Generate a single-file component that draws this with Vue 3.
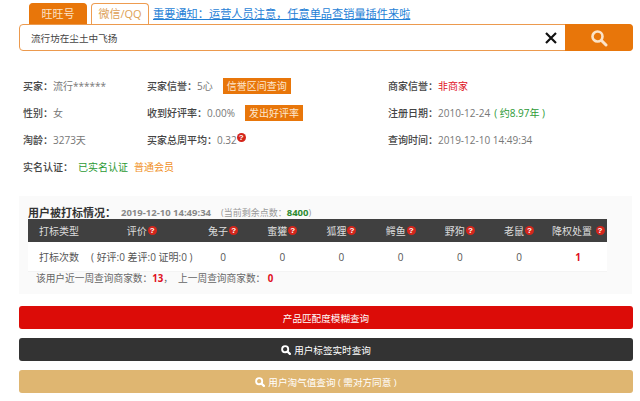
<script setup>
const infoRows = [
  { a: '买家', av: '流行******', b: '买家信誉', bv: '5心', btn: '信誉区间查询', c: '商家信誉', cv: '非商家' },
  { a: '性别', av: '女', b: '收到好评率', bv: '0.00%', btn: '发出好评率', c: '注册日期', cv: '2010-12-24', cy: '( 约8.97年 )' },
  { a: '淘龄', av: '3273天', b: '买家总周平均', bv: '0.32', help: true, c: '查询时间', cv: '2019-12-10 14:49:34' }
]
const tags = ['兔子', '蜜獾', '狐狸', '鳄鱼', '野狗', '老鼠']
</script>

<template>
  <div class="page">
    <div class="tabs">
      <div class="tab active">旺旺号</div>
      <div class="tab">微信/QQ</div>
      <a class="notice">重要通知：运营人员注意，任意单品查销量插件来啦</a>
    </div>

    <div class="search">
      <div class="search-input">流行坊在尘土中飞扬</div>
      <svg class="clear" width="14" height="14" viewBox="0 0 14 14">
        <path d="M2 2 12 12M12 2 2 12" stroke="#111" stroke-width="2.2" fill="none" />
      </svg>
      <div class="search-btn">
        <svg width="18" height="18" viewBox="0 0 18 18">
          <circle cx="7.5" cy="7.5" r="5" stroke="#fbe3c8" stroke-width="2.6" fill="none" />
          <path d="M11.5 11.5 16 16" stroke="#fbe3c8" stroke-width="3" stroke-linecap="round" />
        </svg>
      </div>
    </div>

    <div class="info">
      <div v-for="row in infoRows" :key="row.a" class="info-row">
        <div class="cell c1"><b>{{ row.a }}：</b><span>{{ row.av }}</span></div>
        <div class="cell c2">
          <b>{{ row.b }}：</b><span>{{ row.bv }}</span>
          <i v-if="row.help" class="help up">?</i>
          <em v-if="row.btn">{{ row.btn }}</em>
        </div>
        <div class="cell">
          <b>{{ row.c }}：</b><span :class="{ red: row.c === '商家信誉' }">{{ row.cv }}</span>
          <span v-if="row.cy" class="green">{{ row.cy }}</span>
        </div>
      </div>
      <div class="info-row">
        <div class="cell">
          <b>实名认证：</b><span class="green auth">已实名认证</span><span class="orange">普通会员</span>
        </div>
      </div>
    </div>

    <div class="panel">
      <div class="panel-title">
        <b>用户被打标情况：</b>
        <span class="when">2019-12-10 14:49:34</span>
        <span class="points">(当前剩余点数：<b>8400</b>)</span>
      </div>
      <div class="grid head">
        <div class="first">打标类型</div>
        <div>评价<i class="help">?</i></div>
        <div v-for="t in tags" :key="t">{{ t }}<i class="help">?</i></div>
        <div>降权处置 <i class="help">?</i></div>
      </div>
      <div class="grid body">
        <div class="first">打标次数</div>
        <div>( 好评:0 差评:0 证明:0 )</div>
        <div v-for="t in tags" :key="t">0</div>
        <div class="red strong">1</div>
      </div>
      <div class="week">
        该用户近一周查询商家数：<b>13</b>， &nbsp;上一周查询商家数： <b>0</b>
      </div>
    </div>

    <div class="actions">
      <div class="action a-red">产品匹配度模糊查询</div>
      <div class="action a-dark">
        <svg width="10" height="10" viewBox="0 0 18 18">
          <circle cx="7.5" cy="7.5" r="5.5" stroke="#fff" stroke-width="3.4" fill="none" />
          <path d="M12 12 16 16" stroke="#fff" stroke-width="4" stroke-linecap="round" />
        </svg>
        用户标签实时查询
      </div>
      <div class="action a-tan">
        <svg width="10" height="10" viewBox="0 0 18 18">
          <circle cx="7.5" cy="7.5" r="5.5" stroke="#fff" stroke-width="3.4" fill="none" />
          <path d="M12 12 16 16" stroke="#fff" stroke-width="4" stroke-linecap="round" />
        </svg>
        用户淘气值查询 ( 需对方同意 )
      </div>
    </div>
  </div>
</template>

<style scoped>
.page {
  width: 640px;
  height: 401px;
  overflow: hidden;
  box-sizing: border-box;
  padding: 3px 7px 0 19px;
  font-family: "Open Sans", "Noto Sans CJK SC", sans-serif;
  font-size: 10px;
  color: #777;
  background: #fff;
}

.tabs {
  display: flex;
  align-items: stretch;
  height: 21px;
  padding-left: 10px;
}
.tab {
  box-sizing: border-box;
  width: 58px;
  margin-right: 4px;
  border: 1px solid #ee9c50;
  border-bottom: 0;
  border-radius: 4px 4px 0 0;
  color: #dd9f55;
  font-size: 11px;
  line-height: 20px;
  text-align: center;
}
.tab.active {
  background: #e8760a;
  border-color: #e8760a;
  color: #fbe3c8;
}
.notice {
  color: #1f7fd6;
  font-size: 11.2px;
  line-height: 21px;
  text-decoration: underline;
  white-space: nowrap;
}

.search {
  display: flex;
  align-items: center;
  box-sizing: border-box;
  height: 27px;
  border: 1px solid #ec9a4e;
  border-radius: 4px;
  padding-left: 11px;
}
.search-input {
  flex: 1;
  color: #444;
  font-size: 9.6px;
}
.clear {
  margin-right: 7px;
}
.search-btn {
  display: flex;
  align-items: center;
  justify-content: center;
  width: 68px;
  height: 27px;
  margin-right: -1px;
  background: #e8760a;
  border-radius: 0 4px 4px 0;
}

.info {
  padding: 21px 0 0 4px;
}
.info-row {
  display: flex;
  align-items: center;
  height: 27px;
  white-space: nowrap;
}
.cell {
  display: flex;
  align-items: center;
}
.c1 {
  width: 124px;
}
.c2 {
  width: 241px;
}
.cell b {
  color: #444;
  font-weight: 500;
}
.cell em {
  margin-left: 10px;
  padding: 0 4px;
  height: 16px;
  line-height: 16px;
  background: #e8760a;
  color: #fde7cf;
  font-style: normal;
}
.cell .green {
  margin-left: 4px;
}
.cell .auth {
  margin: 0 6px 0 5px;
}
.green {
  color: #2c9a35;
}
.orange {
  color: #f0901e;
}
.red {
  color: #e0101c;
}

.help {
  display: inline-block;
  width: 9px;
  height: 9px;
  margin-left: 1px;
  border-radius: 50%;
  background: #d4261c;
  color: #fff;
  font-family: "Liberation Sans", sans-serif;
  font-size: 8px;
  font-style: normal;
  font-weight: 700;
  line-height: 9px;
  text-align: center;
  vertical-align: 2px;
}
.help.up {
  margin-top: -4px;
  margin-left: 0;
}

.panel {
  box-sizing: border-box;
  width: 613px;
  height: 98px;
  margin-top: 16px;
  padding: 9px 25px 0 9px;
  background: #fafafa;
}
.panel-title {
  display: flex;
  align-items: center;
  height: 14px;
  white-space: nowrap;
}
.panel-title > b {
  color: #333;
  font-size: 11px;
  font-weight: 700;
}
.when {
  margin-left: 5px;
  color: #888;
  font-size: 9.5px;
  font-weight: 700;
}
.points {
  margin-left: 10px;
  color: #999;
  font-size: 9px;
}
.points b {
  color: #2c8a30;
  font-size: 9.5px;
}

.grid {
  display: grid;
  grid-template-columns: 62px 103.5px repeat(7, 59.2px);
  align-items: center;
  text-align: center;
  white-space: nowrap;
}
.grid .first {
  padding-left: 11px;
  text-align: left;
}
.head {
  height: 23px;
  background: #404040;
  color: #ddd;
}
.body {
  height: 30px;
  background: #fff;
  color: #555;
  border-bottom: 1px solid #f4f4f4;
  box-sizing: border-box;
}
.strong {
  font-weight: 700;
}
.week {
  height: 14px;
  padding-left: 8px;
  font-size: 9.7px;
  line-height: 14px;
  color: #666;
  white-space: nowrap;
}
.week b {
  color: #e0101c;
  font-weight: 700;
}

.actions {
  display: flex;
  flex-direction: column;
  gap: 9px;
  margin-top: 12px;
  width: 614px;
}
.action {
  display: flex;
  align-items: center;
  justify-content: center;
  gap: 3px;
  height: 23px;
  border-radius: 3px;
  color: #fff;
  font-size: 9.6px;
}
.a-red {
  background: #dc0c08;
}
.a-dark {
  background: #333;
}
.a-tan {
  background: #dfb671;
}
</style>
